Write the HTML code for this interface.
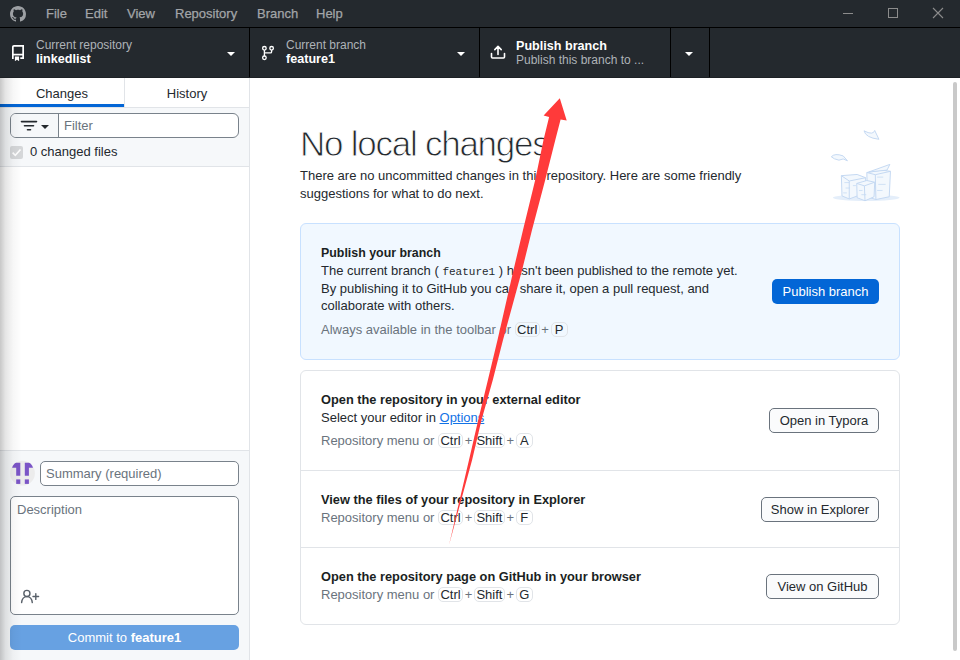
<!DOCTYPE html>
<html><head><meta charset="utf-8">
<style>
*{box-sizing:border-box;margin:0;padding:0}
html,body{width:960px;height:660px;overflow:hidden;background:#fff;font-family:"Liberation Sans",sans-serif;color:#24292e}
.abs{position:absolute}
#title{left:0;top:0;width:960px;height:27px;background:#24292e}
#tsep{left:0;top:27px;width:960px;height:1px;background:#000}
.menu{top:6px;font-size:13px;color:#a2a5a8;line-height:16px;white-space:nowrap;-webkit-text-stroke:0.25px #a2a5a8}
#toolbar{left:0;top:28px;width:960px;height:50px;background:#24292e}
.vsep{top:28px;width:1px;height:50px;background:#000}
.tlabel{font-size:12px;color:#aeb3b8;line-height:14px;white-space:nowrap}
.tval{font-size:12.6px;font-weight:bold;color:#fff;line-height:14px;white-space:nowrap}
.caret{width:0;height:0;border-left:4px solid transparent;border-right:4px solid transparent;border-top:4px solid #fff}
#sidebar{left:0;top:78px;width:249px;height:582px;background:#fff}
#sbr{left:249px;top:78px;width:1px;height:582px;background:#e1e4e8}
.txt{white-space:nowrap;font-size:13px;line-height:16px}
.txt[style*="bold"]{color:#1b1f23}
.kbd{display:inline-block;border:1px solid #e1e4e8;border-radius:5px;padding:0 1.4px;min-width:17px;text-align:center;line-height:13px;height:15px;color:#24292e}
.pl{margin:0 1.7px;color:#6a737d}
.btn{position:absolute;height:25px;border:1px solid #6a737d;border-radius:5px;background:#fafbfc;font-size:13px;line-height:23px;text-align:center;color:#24292e;white-space:nowrap}
</style></head><body>
<!-- title bar -->
<div id="title" class="abs"></div>
<div id="tsep" class="abs"></div>
<svg class="abs" style="left:10px;top:6px" width="16" height="16" viewBox="0 0 16 16"><path fill="#9da0a4" d="M8 0C3.58 0 0 3.58 0 8c0 3.54 2.29 6.53 5.47 7.59.4.07.55-.17.55-.38 0-.19-.01-.82-.01-1.49-2.01.37-2.53-.49-2.69-.94-.09-.23-.48-.94-.82-1.13-.28-.15-.68-.52-.01-.53.63-.01 1.08.58 1.23.82.72 1.21 1.87.87 2.33.66.07-.52.28-.87.51-1.07-1.780-.2-3.64-.89-3.64-3.95 0-.87.31-1.59.82-2.15-.08-.2-.36-1.02.08-2.12 0 0 .67-.21 2.2.82.64-.18 1.32-.27 2-.27.68 0 1.36.09 2 .27 1.53-1.04 2.2-.82 2.2-.82.44 1.1.16 1.92.08 2.12.51.56.82 1.27.82 2.15 0 3.07-1.87 3.75-3.65 3.95.29.25.54.73.54 1.48 0 1.07-.01 1.93-.01 2.2 0 .21.15.46.55.38A8.013 8.013 0 0016 8c0-4.42-3.58-8-8-8z"/></svg>
<div class="abs menu" style="left:46px">File</div>
<div class="abs menu" style="left:85px">Edit</div>
<div class="abs menu" style="left:127px">View</div>
<div class="abs menu" style="left:175px">Repository</div>
<div class="abs menu" style="left:257px">Branch</div>
<div class="abs menu" style="left:316px">Help</div>
<!-- window controls -->
<div class="abs" style="left:843px;top:13px;width:10px;height:1px;background:#8c8c8c"></div>
<div class="abs" style="left:888px;top:8px;width:10px;height:10px;border:1px solid #8c8c8c"></div>
<svg class="abs" style="left:932px;top:7px" width="12" height="12" viewBox="0 0 12 12"><path d="M1 1L11 11M11 1L1 11" stroke="#8c8c8c" stroke-width="1.1"/></svg>

<!-- toolbar -->
<div id="toolbar" class="abs"></div>
<div class="abs vsep" style="left:249px"></div>
<div class="abs vsep" style="left:479px"></div>
<div class="abs vsep" style="left:670px"></div>
<div class="abs vsep" style="left:709px"></div>
<div class="abs" style="left:0;top:77px;width:960px;height:1px;background:#1d2125"></div>
<!-- repo icon -->
<svg class="abs" style="left:12px;top:45px" width="12" height="16" viewBox="0 0 12 16"><g fill="none" stroke="#fff" stroke-width="1.7"><path d="M0.85 14V2Q0.85 0.85 2 0.85H11.15V13.15H8.3"/><path d="M0.85 9.6H11.15"/></g><path fill="#fff" d="M2.9 11.6H7.1V16.2L5 14.7L2.9 16.2Z"/></svg>
<div class="abs tlabel" style="left:36px;top:38px">Current repository</div>
<div class="abs tval" style="left:36px;top:52px">linkedlist</div>
<div class="abs caret" style="left:227px;top:52px"></div>
<!-- branch icon -->
<svg class="abs" style="left:261px;top:45px" width="14" height="16" viewBox="0 0 14 16"><g fill="none" stroke="#fff" stroke-width="1.35"><circle cx="3.4" cy="3.3" r="1.8"/><circle cx="10.6" cy="3.3" r="1.8"/><circle cx="3.4" cy="12.8" r="1.8"/><path d="M3.4 5.1v5.9M10.6 5.1v1.6q0 1.2-1.2 1.2H3.4"/></g></svg>
<div class="abs tlabel" style="left:286px;top:38px">Current branch</div>
<div class="abs tval" style="left:286px;top:52px">feature1</div>
<div class="abs caret" style="left:457px;top:52px"></div>
<!-- publish icon -->
<svg class="abs" style="left:490px;top:45px" width="16" height="15" viewBox="0 0 16 15"><g fill="none" stroke="#fff" stroke-width="1.6" stroke-linecap="round" stroke-linejoin="round"><path d="M1.5 8.5v3.5q0 1 1 1h11q1 0 1-1V8.5"/><path d="M8 9.5V1.5M4.8 4.6L8 1.4l3.2 3.2"/></g></svg>
<div class="abs tval" style="left:516px;top:39px">Publish branch</div>
<div class="abs tlabel" style="left:516px;top:53px">Publish this branch to ...</div>
<div class="abs caret" style="left:685px;top:52px"></div>

<!-- sidebar -->
<div id="sidebar" class="abs"></div>
<div id="sbr" class="abs"></div>

<!-- tabs -->
<div class="abs txt" style="left:0;top:86px;width:124px;text-align:center;color:#24292e">Changes</div>
<div class="abs txt" style="left:125px;top:86px;width:124px;text-align:center;color:#24292e">History</div>
<div class="abs" style="left:124px;top:78px;width:1px;height:29px;background:#e1e4e8"></div>
<div class="abs" style="left:0;top:104px;width:124px;height:3px;background:#0366d6"></div>
<div class="abs" style="left:0;top:107px;width:249px;height:60px;background:#f6f8fa;border-top:1px solid #e1e4e8;border-bottom:1px solid #e1e4e8"></div>
<!-- filter -->
<div class="abs" style="left:10px;top:113px;width:229px;height:25px;border:1px solid #79828b;border-radius:6px;background:#fff;overflow:hidden">
  <div class="abs" style="left:0;top:0;width:48px;height:23px;background:#f6f8fa;border-right:1px solid #79828b"></div>
</div>
<svg class="abs" style="left:20px;top:120px" width="30" height="12" viewBox="0 0 30 12"><g stroke="#24292e" stroke-width="1.6" stroke-linecap="round"><path d="M1.5 1.6h15M4.5 5.8h9M7.5 9.7h3"/></g><path d="M21 5h8l-4 4z" fill="#24292e"/></svg>
<div class="abs txt" style="left:64px;top:118px;color:#6a737d">Filter</div>
<!-- checkbox -->
<div class="abs" style="left:10px;top:146px;width:13px;height:13px;border-radius:2px;background:#d5d7d9"></div>
<svg class="abs" style="left:10px;top:146px" width="13" height="13" viewBox="0 0 13 13"><path d="M2.6 6.6l2.7 2.7 5.2-5.8" fill="none" stroke="#fff" stroke-width="1.6"/></svg>
<div class="abs txt" style="left:30px;top:144px;color:#24292e">0 changed files</div>
<!-- commit area -->
<div class="abs" style="left:0;top:450px;width:249px;height:210px;background:#f6f8fa;border-top:1px solid #e1e4e8"></div>
<svg class="abs" style="left:0;top:450px" width="40" height="40" viewBox="0 450 40 40"><circle cx="22.5" cy="473.2" r="12.4" fill="#ececec"/><g fill="#7b55c7"><path d="M16.2 462.8H20.3V475.7H16.2V467.8H12.1Q13.5 463.6 16.2 462.8Z"/><path d="M24.8 462.8H28.9Q31.6 463.6 33 467.8H28.9V475.7H24.8Z"/><rect x="16.2" y="479.4" width="4.1" height="4.5"/><rect x="24.8" y="479.4" width="4.1" height="4.5"/></g></svg>
<div class="abs" style="left:40px;top:461px;width:199px;height:25px;border:1px solid #79828b;border-radius:5px;background:#fff"></div>
<div class="abs txt" style="left:46px;top:466px;color:#6a737d">Summary (required)</div>
<div class="abs" style="left:10px;top:496px;width:229px;height:119px;border:1px solid #79828b;border-radius:5px;background:#fff"></div>
<div class="abs txt" style="left:17px;top:502px;color:#6a737d">Description</div>
<svg class="abs" style="left:14px;top:584px" width="30" height="24" viewBox="0 0 30 24"><g fill="none" stroke="#586069" stroke-width="1.4" stroke-linecap="round"><circle cx="12.9" cy="9.4" r="3.05"/><path d="M7.6 18.6C8 14.8 10 12.6 12.9 12.6C15.8 12.6 17.9 14.8 18.3 18.6"/><path d="M19 12.5H24.6M21.8 9.6V15.4"/></g></svg>
<div class="abs" style="left:10px;top:625px;width:229px;height:25px;border-radius:5px;background:#67a1e2;color:#fff;text-align:center;font-size:13px;line-height:25px;white-space:nowrap">Commit to <b>feature1</b></div>
<!-- left shadow -->
<div class="abs" style="left:0;top:78px;width:22px;height:582px;background:linear-gradient(to right,rgba(0,0,0,0.22),rgba(0,0,0,0.10) 25%,rgba(0,0,0,0.03) 60%,rgba(0,0,0,0))"></div>

<!-- main -->
<div class="abs" style="left:300px;top:124px;font-size:35px;line-height:40px;color:#24292e;white-space:nowrap;letter-spacing:-1.25px;-webkit-text-stroke:0.9px #fff">No local changes</div>
<div class="abs txt" style="left:300px;top:167px;line-height:18px;color:#24292e">There are no uncommitted changes in this repository. Here are some friendly<br>suggestions for what to do next.</div>
<!-- publish card -->
<div class="abs" style="left:300px;top:223px;width:600px;height:137px;border:1px solid #c8e1ff;border-radius:6px;background:#f1f8ff"></div>
<div class="abs txt" style="left:321px;top:245px;font-weight:bold;font-size:12.4px">Publish your branch</div>
<div class="abs txt" style="left:321px;top:263px">The current branch ( <span style="font-family:'Liberation Mono';font-size:11px;line-height:10px">feature1</span> ) hasn't been published to the remote yet.</div>
<div class="abs txt" style="left:321px;top:281px">By publishing it to GitHub you can share it, open a pull request, and</div>
<div class="abs txt" style="left:321px;top:298px">collaborate with others.</div>
<div class="abs txt" style="left:321px;top:322px;color:#6a737d">Always available in the toolbar or <span class="kbd">Ctrl</span><span class="pl">+</span><span class="kbd">P</span></div>
<div class="abs" style="left:772px;top:279px;width:107px;height:25px;border-radius:5px;background:#0366d6;color:#fff;font-size:13px;line-height:25px;text-align:center;white-space:nowrap">Publish branch</div>
<!-- actions card -->
<div class="abs" style="left:300px;top:370px;width:600px;height:255px;border:1px solid #e1e4e8;border-radius:6px;background:#fff"></div>
<div class="abs" style="left:301px;top:470px;width:598px;height:1px;background:#e1e4e8"></div>
<div class="abs" style="left:301px;top:547px;width:598px;height:1px;background:#e1e4e8"></div>
<div class="abs txt" style="left:321px;top:392px;font-weight:bold;font-size:12.8px">Open the repository in your external editor</div>
<div class="abs txt" style="left:321px;top:410px">Select your editor in <span style="color:#1272e6;text-decoration:underline">Options</span></div>
<div class="abs txt" style="left:321px;top:433px;color:#6a737d">Repository menu or <span class="kbd">Ctrl</span><span class="pl">+</span><span class="kbd">Shift</span><span class="pl">+</span><span class="kbd">A</span></div>
<div class="btn" style="left:769px;top:408px;width:110px">Open in Typora</div>
<div class="abs txt" style="left:321px;top:492px;font-weight:bold;font-size:12.8px">View the files of your repository in Explorer</div>
<div class="abs txt" style="left:321px;top:510px;color:#6a737d">Repository menu or <span class="kbd">Ctrl</span><span class="pl">+</span><span class="kbd">Shift</span><span class="pl">+</span><span class="kbd">F</span></div>
<div class="btn" style="left:761px;top:497px;width:118px">Show in Explorer</div>
<div class="abs txt" style="left:321px;top:569px;font-weight:bold;font-size:12.8px">Open the repository page on GitHub in your browser</div>
<div class="abs txt" style="left:321px;top:587px;color:#6a737d">Repository menu or <span class="kbd">Ctrl</span><span class="pl">+</span><span class="kbd">Shift</span><span class="pl">+</span><span class="kbd">G</span></div>
<div class="btn" style="left:766px;top:574px;width:113px">View on GitHub</div>

<!-- illustration -->
<svg class="abs" style="left:825px;top:125px" width="80" height="80" viewBox="0 0 660 660"><g stroke="#c3d8f2" stroke-width="8" stroke-linejoin="round" fill="#f3f8fd">
<ellipse cx="340" cy="600" rx="275" ry="26" fill="#e4eefa" stroke="none"/>
<path d="M135 418L265 408L335 435L335 560L200 610L140 585Z"/>
<path d="M135 418L200 462L335 435M200 462L200 610" fill="none"/>
<path d="M345 392L470 372L540 382L530 592L420 615L350 592Z"/>
<path d="M345 392L415 410L540 382M415 410L420 615" fill="none"/>
<path d="M360 388L535 325L512 372Z"/>
<path d="M262 482L345 458L410 472L405 592L330 625L265 600Z"/>
<path d="M262 482L325 502L410 472M325 502L330 625" fill="none"/>
<path d="M160 475h40M170 520h35M150 560h30M280 540h30M300 575h40M430 430h50M440 490h60M430 540h45M230 500h25" fill="none" stroke-width="6"/>
<path d="M322 48Q335 105 445 118L410 45Q398 88 322 48Z"/>
<path d="M52 262Q80 230 150 255L185 295Q150 268 115 290Q72 282 52 262Z"/>
</g></svg>
<!-- scrollbar -->
<div class="abs" style="left:953px;top:82px;width:4px;height:569px;border-radius:2px;background:#c9c9c9"></div>
<!-- arrow -->
<svg class="abs" style="left:0;top:0" width="960" height="660" viewBox="0 0 960 660"><path fill="#ff3a3a" d="M559.8 98.2L566.7 120.6L560.6 119.4L555.3 140L545.2 180L532 230L522.1 270L503 340L492.8 380L481.5 420L472.1 460L449 545L469 460L478.2 420L487.9 380L497.5 340L513.5 270L523 230L535.2 180L543.5 140L549.1 117L543.6 115.4Z"/></svg>
</body></html>
